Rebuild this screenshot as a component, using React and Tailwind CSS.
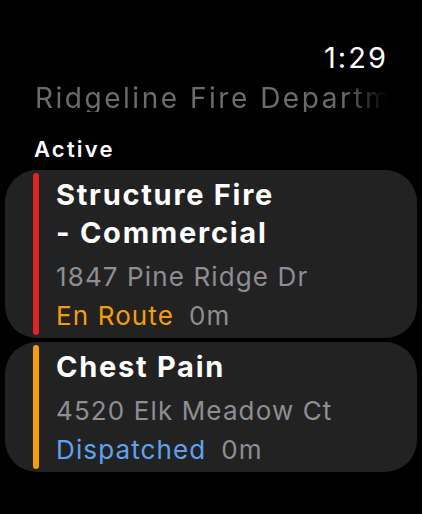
import React from "react";

const calls = [
  {
    id: 1,
    title: "Structure Fire - Commercial",
    address: "1847 Pine Ridge Dr",
    status: "En Route",
    statusColor: "text-[#f59e0b]",
    barColor: "bg-[#dc2626]",
    elapsed: "0m",
  },
  {
    id: 2,
    title: "Chest Pain",
    address: "4520 Elk Meadow Ct",
    status: "Dispatched",
    statusColor: "text-[#5fa2f0]",
    barColor: "bg-[#f59e0b]",
    elapsed: "0m",
  },
];

const CallCard = ({ call }) => {
  return (
    <div className="flex rounded-[32px] bg-[#222222] py-[3px] pl-[28px] pr-4">
      <div className={`w-[6px] shrink-0 rounded-full ${call.barColor}`} />
      <div className="ml-[17px] flex min-w-0 flex-col pt-[3px] tracking-[0.07em]">
        <div className="w-[222px] text-[29px] font-bold leading-[38px] tracking-[0.06em] text-white">
          {call.title}
        </div>
        <div className="mt-[5px] text-[26px] leading-[40px] text-[#8e8e93]">
          {call.address}
        </div>
        <div className="flex gap-[15px] text-[26px] leading-[38px]">
          <span className={call.statusColor}>{call.status}</span>
          <span className="text-[#8e8e93]">{call.elapsed}</span>
        </div>
      </div>
    </div>
  );
};

export default function App() {
  return (
    <div className="h-[514px] w-[422px] overflow-hidden bg-black pt-[43px] font-['Inter',sans-serif]">
      <div className="flex justify-end pr-[34px] text-[29px] leading-[29px] tracking-[0.07em] text-white">
        1:29
      </div>
      <div className="mt-[12px] ml-[35px] w-[352px] overflow-hidden whitespace-nowrap text-[28px] leading-[28px] tracking-[0.09em] text-[#6b6b6b] [mask-image:linear-gradient(to_right,black_88%,transparent)]">
        Ridgeline Fire Department
      </div>
      <div className="mt-[27px] ml-[34px] text-[22px] font-semibold leading-[21px] tracking-[0.1em] text-white">
        Active
      </div>
      <div className="mt-[10px] flex flex-col gap-[4px] px-[5px]">
        {calls.map((call) => (
          <CallCard key={call.id} call={call} />
        ))}
      </div>
    </div>
  );
}
